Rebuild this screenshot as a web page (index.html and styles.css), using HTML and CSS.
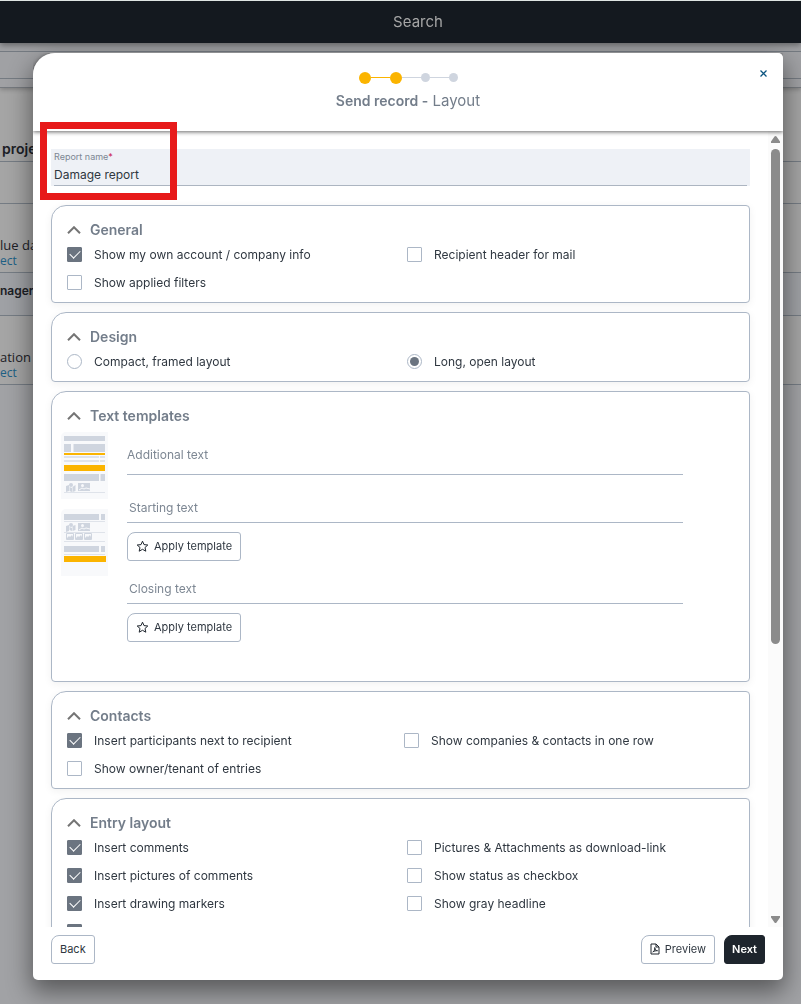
FILE: index.html
```html
<!DOCTYPE html>
<html lang="en">
<head>
    <meta charset="UTF-8">
    <meta name="viewport" content="width=device-width, initial-scale=1">
    <title>Send record</title>
    <link rel="stylesheet" href="styles.css">
</head>
<body>
    <div class="page">
        <header class="topbar">Search</header>
        <div class="toolbar"><div class="toolbar-box"></div></div>
        <div class="row row-title"><b>proje</b></div>
        <div class="row row-empty"></div>
        <div class="row row-entry"><span>lue da</span><a href="#">ect</a></div>
        <div class="row row-group"><b>nager</b></div>
        <div class="row row-entry"><span>ation</span><a href="#">ect</a></div>
        <div class="row row-rest"></div>
    </div>

    <div class="overlay">
        <form class="modal" role="dialog" aria-labelledby="modal-title">
            <header class="modal-header">
                <div class="steps">
                    <i class="dot done"></i><i class="line done"></i>
                    <i class="dot done"></i><i class="line"></i>
                    <i class="dot"></i><i class="line"></i>
                    <i class="dot"></i>
                </div>
                <h1 class="modal-title" id="modal-title"><b>Send record -</b> Layout</h1>
                <button type="button" class="close" aria-label="Close">
                    <svg width="7" height="7" viewBox="0 0 7 7"><path d="M0.5 0.5l6 6M6.5 0.5l-6 6" stroke="#0b5580" stroke-width="1.3"/></svg>
                </button>
            </header>

            <div class="modal-main">
                <div class="modal-body">
                    <div class="name-field">
                        <label for="report-name">Report name<span>*</span></label>
                        <input type="text" id="report-name" value="Damage report">
                    </div>

                    <section class="card">
                        <h2><svg class="chevron" viewBox="0 0 14 8"><path d="M1 7.200l6-6 6 6"/></svg>General</h2>
                        <div class="options">
                            <label><input type="checkbox" checked>Show my own account / company info</label>
                            <label><input type="checkbox">Recipient header for mail</label>
                            <label><input type="checkbox">Show applied filters</label>
                        </div>
                    </section>

                    <section class="card">
                        <h2><svg class="chevron" viewBox="0 0 14 8"><path d="M1 7.200l6-6 6 6"/></svg>Design</h2>
                        <div class="options">
                            <label><input type="radio" name="design">Compact, framed layout</label>
                            <label><input type="radio" name="design" checked>Long, open layout</label>
                        </div>
                    </section>

                    <section class="card">
                        <h2><svg class="chevron" viewBox="0 0 14 8"><path d="M1 7.200l6-6 6 6"/></svg>Text templates</h2>
                        <div class="templates">
                            <div class="thumbs">
                                <svg width="47" height="67" viewBox="0 0 47 67">
                                    <path d="M5 0h42v67H0V5a5 5 0 0 1 5-5z" fill="#f8f9fb"/>
                                    <g fill="#cfd5df">
                                        <rect x="3" y="4" width="41" height="5"/>
                                        <rect x="3" y="12" width="7" height="8"/>
                                        <rect x="12.500" y="12" width="31.500" height="8"/>
                                        <rect x="3" y="42" width="35" height="7"/>
                                        <rect x="39.500" y="42" width="4.500" height="7"/>
                                        <path d="M5 54l3-1v6l-3 1zM8.500 55l2.500 1v4l-2.500-1zM11.500 55l3-2v6l-3 1z"/>
                                        <circle cx="10" cy="53" r="2"/>
                                        <path d="M17 51h12v8H17z"/>
                                    </g>
                                    <g fill="#dfe3ea">
                                        <rect x="3" y="24" width="35" height="2"/>
                                        <rect x="39" y="24" width="5" height="2"/>
                                        <rect x="3" y="28" width="35" height="2"/>
                                        <rect x="39" y="28" width="5" height="2"/>
                                        <rect x="3" y="60" width="41" height="1"/>
                                    </g>
                                    <circle cx="21.500" cy="53.500" r="1.500" fill="#f8f9fb"/>
                                    <path d="M18 58l3-2 2 1 2-1 4 1" fill="none" stroke="#f8f9fb"/>
                                    <rect x="3" y="21" width="41" height="2" fill="#fbb400"/>
                                    <rect x="3" y="33" width="41" height="6" fill="#fbb400"/>
                                </svg>
                                <svg width="47" height="67" viewBox="0 0 47 67">
                                    <path d="M5 0h42v67H0V5a5 5 0 0 1 5-5z" fill="#f8f9fb"/>
                                    <g fill="#cfd5df">
                                        <rect x="3" y="5" width="35" height="6"/>
                                        <rect x="40" y="5" width="4" height="6"/>
                                        <path d="M5 17l3-1v6l-3 1zM8.500 18l2.500 1v3l-2.500-1zM11.500 17l3-1v5l-3 1z"/>
                                        <circle cx="10" cy="16" r="2"/>
                                        <path d="M17 14h12v8H17z"/>
                                        <rect x="3" y="37" width="35" height="6"/>
                                        <rect x="40" y="37" width="4" height="6"/>
                                        <path d="M6 31v-2l2-2 1 1 2-2 1 2v3zM15 31v-2l2-2 1 1 2-2 1 2v3zM24 31v-2l2-2 1 1 2-2 1 2v3z"/>
                                    </g>
                                    <path d="M5.500 24.500h7v6h-7zM14.500 24.500h7v6h-7zM23.500 24.500h7v6h-7z" fill="none" stroke="#cfd5df"/>
                                    <g fill="#dfe3ea">
                                        <rect x="3" y="12" width="41" height="1"/>
                                        <rect x="3" y="23" width="41" height="1"/>
                                        <rect x="3" y="32" width="41" height="1"/>
                                        <rect x="3" y="45" width="41" height="1"/>
                                    </g>
                                    <circle cx="21.500" cy="16.500" r="1.500" fill="#f8f9fb"/>
                                    <path d="M18 21l3-2 2 1 2-1 4 1" fill="none" stroke="#f8f9fb"/>
                                    <rect x="3" y="47" width="42" height="6" fill="#fbb400"/>
                                </svg>
                            </div>
                            <div class="texts">
                                <input type="text" class="additional" placeholder="Additional text" aria-label="Additional text">
                                <input type="text" placeholder="Starting text" aria-label="Starting text">
                                <button type="button" class="btn">
                                    <svg width="13" height="13" viewBox="0 0 13 13"><path class="stroke" d="M6.500 1.200l1.500 3.400 3.800.4-2.800 2.500.8 3.700-3.300-1.900-3.300 1.900.8-3.700L1.200 5l3.800-.4z"/></svg>Apply template
                                </button>
                                <input type="text" placeholder="Closing text" aria-label="Closing text">
                                <button type="button" class="btn">
                                    <svg width="13" height="13" viewBox="0 0 13 13"><path class="stroke" d="M6.500 1.200l1.500 3.400 3.800.4-2.800 2.500.8 3.700-3.300-1.900-3.300 1.900.8-3.700L1.200 5l3.800-.4z"/></svg>Apply template
                                </button>
                            </div>
                        </div>
                    </section>

                    <section class="card">
                        <h2><svg class="chevron" viewBox="0 0 14 8"><path d="M1 7.200l6-6 6 6"/></svg>Contacts</h2>
                        <div class="options options-contacts">
                            <label><input type="checkbox" checked>Insert participants next to recipient</label>
                            <label><input type="checkbox">Show companies &amp; contacts in one row</label>
                            <label><input type="checkbox">Show owner/tenant of entries</label>
                        </div>
                    </section>

                    <section class="card">
                        <h2><svg class="chevron" viewBox="0 0 14 8"><path d="M1 7.200l6-6 6 6"/></svg>Entry layout</h2>
                        <div class="options">
                            <label><input type="checkbox" checked>Insert comments</label>
                            <label><input type="checkbox">Pictures &amp; Attachments as download-link</label>
                            <label><input type="checkbox" checked>Insert pictures of comments</label>
                            <label><input type="checkbox">Show status as checkbox</label>
                            <label><input type="checkbox" checked>Insert drawing markers</label>
                            <label><input type="checkbox">Show gray headline</label>
                            <label><input type="checkbox" checked aria-label="Insert drawings"></label>
                        </div>
                    </section>
                </div>
                <div class="scrollbar" aria-hidden="true">
                    <svg width="9" height="7" viewBox="0 0 9 7"><path d="M4.500 0q.6 0 1 .6L9 5.500V7H0V5.500L3.500.6q.4-.6 1-.6z" fill="#8b8b8b"/></svg>
                    <div class="track"><div class="thumb"></div></div>
                    <svg width="9" height="7" viewBox="0 0 9 7"><path d="M4.500 7q.6 0 1-.6L9 1.500V0H0v1.500l3.500 4.900q.4.600 1 .6z" fill="#8b8b8b"/></svg>
                </div>
            </div>

            <footer class="modal-footer">
                <button type="button" class="btn">Back</button>
                <span class="spacer"></span>
                <button type="button" class="btn">
                    <svg width="10" height="12" viewBox="0 0 10 12"><path class="stroke" d="M1 1h5l3 3v7H1zM6 1v3h3M2.800 9c1.500-.6 2.200-2.500 2-4.500 0 2 1 3 2.700 3.200-2 0-3.500.3-4.700 1.300z"/></svg>Preview
                </button>
                <button type="submit" class="btn btn-next">Next</button>
            </footer>
            <div class="marker"></div>
        </form>
    </div>
</body>
</html>
```
FILE: styles.css
```css
* {
    box-sizing: border-box;
}
body {
    margin: 0;
    font-family: Inter, "Liberation Sans", sans-serif;
    font-size: 12px;
    color: #2f3740;
}
input, button {
    font: inherit;
    color: inherit;
}

/* dimmed page behind the dialog */
.page {
    display: flex;
    flex-direction: column;
    min-height: 100vh;
    border-top: 1px solid #dfe5e2;
    background: #a5a5a5;
    overflow: hidden;
    color: #1c2026;
}
.topbar {
    height: 42px;
    padding-left: 35px;
    line-height: 42px;
    text-align: center;
    font-size: 15px;
    color: #a6a6a6;
    background: #14191f;
    box-shadow: 0 2px 6px rgba(0, 0, 0, 0.4);
    z-index: 1;
}
.toolbar {
    padding: 8px 0;
    background: #a0a1a4;
    border-bottom: 1px solid #75797e;
    box-shadow: 0 2px 4px rgba(0, 0, 0, 0.2);
}
.toolbar-box {
    height: 28px;
    border-top: 1px solid #757b82;
    border-bottom: 1px solid #757b82;
}
.row {
    display: flex;
    flex-direction: column;
    border-bottom: 1px solid #757c84;
    white-space: nowrap;
}
.row b {
    font-weight: 600;
}
.row-title {
    height: 74px;
    padding: 51px 2px 0;
    font-size: 14px;
    line-height: 20px;
}
.row-empty {
    height: 42px;
}
.row-entry {
    height: 69px;
    padding-top: 31px;
    font-family: "Open Sans", sans-serif;
    font-size: 13px;
    line-height: 20px;
}
.row-entry a {
    font-size: 12px;
    line-height: 12px;
    color: #1d6084;
    text-decoration: none;
}
.row-group {
    height: 43px;
    padding-top: 8px;
    line-height: 20px;
    background: #9fa1a5;
}
.row-rest {
    flex: 1;
    border: 0;
    background: #a1a2a5;
}

/* dialog */
.overlay {
    position: fixed;
    inset: 0;
    display: flex;
    padding: 53px 18px 24px 33px;
}
.modal {
    position: relative;
    display: flex;
    flex: 1;
    flex-direction: column;
    min-width: 0;
    background: #fff;
    border-radius: 22px 5px 5px 5px;
    box-shadow: 0 10px 24px 2px rgba(0, 0, 0, 0.45);
}
.modal-header {
    position: relative;
    display: flex;
    flex-direction: column;
    align-items: center;
    height: 78px;
    padding-top: 18px;
    gap: 8px;
    border-radius: 22px 5px 0 0;
    background: #fff;
    box-shadow: 0 1px 4px rgba(0, 0, 0, 0.6);
    clip-path: inset(0 0 -8px 0);
    z-index: 1;
}
.steps {
    display: flex;
    align-items: center;
    height: 13px;
}
.dot {
    width: 9px;
    height: 9px;
    border-radius: 50%;
    background: #cfd5df;
}
.dot.done {
    width: 12px;
    height: 12px;
    background: #fbb400;
}
.line {
    width: 19px;
    height: 1px;
    background: #cfd5df;
}
.line.done {
    background: #fbb400;
}
.modal-title {
    margin: 0;
    font-size: 15px;
    line-height: 18px;
    font-weight: 400;
    color: #737d8a;
}
.modal-title b {
    font-size: 14px;
    font-weight: 600;
}
.close {
    position: absolute;
    top: 11px;
    right: 11px;
    display: flex;
    align-items: center;
    justify-content: center;
    width: 18px;
    height: 18px;
    padding: 0;
    border: 0;
    background: none;
}
.modal-main {
    display: flex;
    flex: 1;
    min-height: 0;
}
.modal-body {
    display: flex;
    flex: 1;
    flex-direction: column;
    gap: 9px;
    padding: 18px;
    overflow-y: auto;
    scrollbar-width: none;
}
.modal-body > * {
    flex-shrink: 0;
}
.scrollbar {
    display: flex;
    flex-direction: column;
    align-items: center;
    width: 15px;
    padding: 5px 0 4px;
    gap: 6px;
    background: #fbfbfb;
}
.track {
    flex: 1;
}
.thumb {
    width: 9px;
    height: 65%;
    border-radius: 5px;
    background: #8b8b8b;
}

.name-field {
    display: flex;
    flex-direction: column;
    height: 37px;
    margin-bottom: 10px;
    padding: 2px 3px 0;
    background: #eef1f6;
}
.name-field label {
    font-size: 9px;
    line-height: 12px;
    color: #7d8793;
}
.name-field label span {
    color: #c8174f;
}
.name-field input {
    height: 23px;
    padding: 1px 0 0;
    border: 0;
    border-bottom: 1px solid #acb5c1;
    background: none;
}

.card {
    padding: 14px 2px 6px 15px;
    border: 1px solid #acb7c6;
    border-radius: 15px 4px 4px 4px;
    background: #fff;
    box-shadow: 0 2px 8px rgba(0, 0, 0, 0.06);
}
.card h2 {
    display: flex;
    align-items: center;
    gap: 9px;
    margin: 0;
    font-size: 14px;
    line-height: 20px;
    font-weight: 600;
    color: #737d8a;
}
.chevron {
    width: 14px;
    height: 8px;
}
.chevron path {
    fill: none;
    stroke: #757575;
    stroke-width: 2;
}
.options {
    display: grid;
    grid-template-columns: 1fr 1fr;
}
.options-contacts {
    padding-right: 6px;
}
.options label {
    display: flex;
    align-items: center;
    gap: 12px;
    height: 28px;
}
.options input {
    appearance: none;
    display: flex;
    align-items: center;
    justify-content: center;
    width: 15px;
    height: 15px;
    margin: 0;
    border: 1px solid #acb7c6;
    border-radius: 1px;
    background: #fff;
}
.options input[type="checkbox"]:checked {
    border-color: #6b7480;
    background: #6b7480;
}
.options input[type="checkbox"]:checked::before {
    content: "";
    width: 9px;
    height: 5px;
    margin-bottom: 3px;
    border: solid #fff;
    border-width: 0 0 1px 1px;
    transform: rotate(-45deg);
}
.options input[type="radio"] {
    border-radius: 50%;
}
.options input[type="radio"]:checked::before {
    content: "";
    width: 9px;
    height: 9px;
    border-radius: 50%;
    background: #6b7480;
}

.templates {
    display: flex;
    gap: 19px;
    padding: 6px 64px 22px 0;
}
.thumbs {
    display: flex;
    flex-direction: column;
    gap: 10px;
    margin-left: -6px;
}
.texts {
    display: flex;
    flex: 1;
    flex-direction: column;
    align-items: flex-start;
}
.texts input {
    width: 100%;
    height: 32px;
    margin-bottom: 9px;
    padding: 2px 2px 0;
    border: 0;
    border-bottom: 1px solid #acb7c6;
    background: none;
}
.texts input::placeholder {
    color: #7d8793;
    opacity: 1;
}
.texts .additional {
    height: 43px;
    margin-bottom: 16px;
    padding: 2px 0 0;
}
.texts .btn {
    margin-bottom: 11px;
}

.btn {
    display: inline-flex;
    align-items: center;
    height: 29px;
    padding: 0 8px 1px;
    gap: 5px;
    border: 1px solid #acb7c6;
    border-radius: 8px 3px 3px 3px;
    background: #fff;
    font-size: 11px;
}
.stroke {
    fill: none;
    stroke: #1e252d;
}
.modal-footer {
    display: flex;
    padding: 8px 18px 16px;
}
.spacer {
    flex: 1;
}
.btn-next {
    margin-left: 9px;
    padding: 0 7px 1px;
    border-color: #1e252d;
    background: #1e252d;
    color: #fff;
    font-weight: 600;
}

/* highlight round the report name */
.marker {
    position: absolute;
    top: 69px;
    left: 7px;
    width: 137px;
    height: 78px;
    border: 7px solid #e71a1a;
    pointer-events: none;
    z-index: 2;
}
```
